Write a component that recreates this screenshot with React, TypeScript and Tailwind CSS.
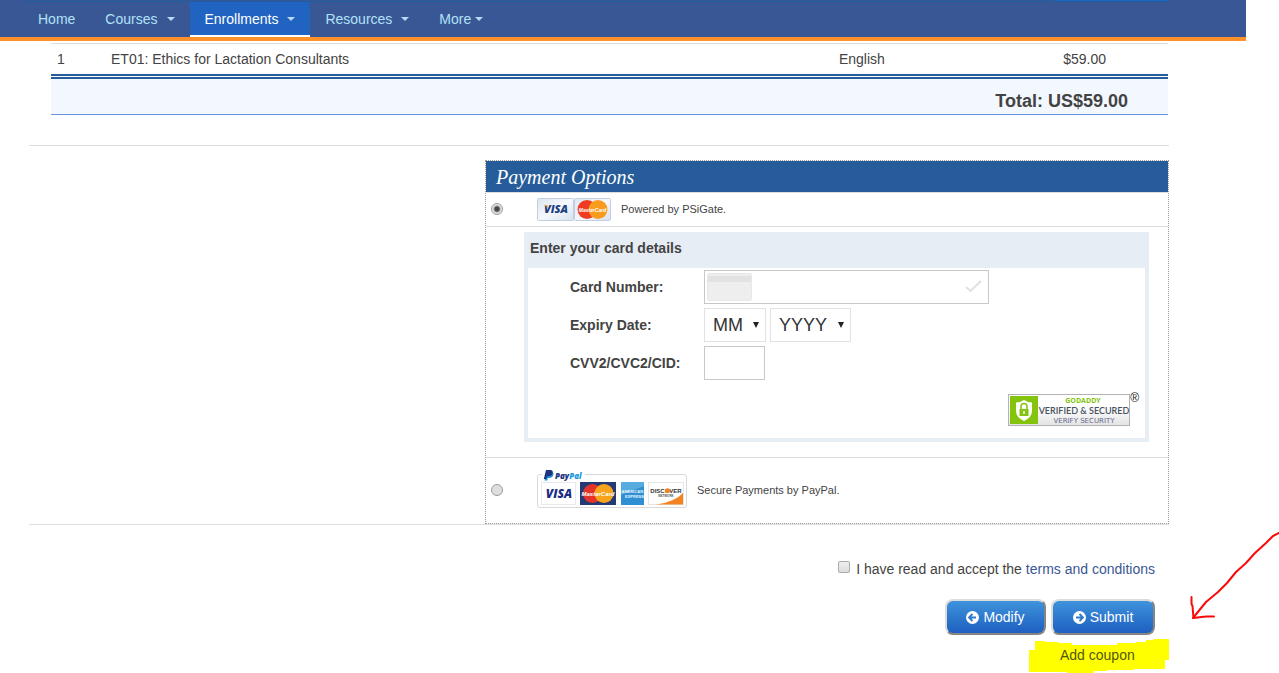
import { useState } from "react";

const navItems = [
  { label: "Home" },
  { label: "Courses", caret: "ml-[9px]" },
  { label: "Enrollments", caret: "ml-[9px]", active: true },
  { label: "Resources", caret: "ml-[9px]" },
  { label: "More", caret: "ml-1" },
];

const rows = [
  { no: 1, title: "ET01: Ethics for Lactation Consultants", language: "English", price: "$59.00" },
];

const radioClass =
  "m-0 mb-0.5 size-3 shrink-0 appearance-none rounded-full border border-[#9c9c9c] bg-[#dedede] checked:bg-[radial-gradient(circle,#484848_0_2px,#e4e4e4_4px)]";
const inputClass = "h-[34px] rounded-none border border-[#c8c8c8] bg-white text-lg text-[#333] outline-none";
const selectClass =
  "h-[34px] w-full appearance-none rounded-none border border-[#e2e2e2] bg-white pl-2 text-lg text-[#333] outline-none";
const buttonClass =
  "flex h-9 items-center justify-center gap-1 rounded-lg border-2 border-t-[#dcdcdc] border-r-[#858585] border-b-[#858585] border-l-[#dcdcdc] bg-linear-to-b from-[#3f93dc] to-[#1f5fc0] text-white";

function Navbar() {
  return (
    <nav className="mr-[33px] h-[41px] border-b-4 border-[#ff912b] bg-[#3a5795]">
      <div className="mr-[77px] ml-auto h-px w-[115px] bg-[#2163c1]" />
      <div className="mr-[77px] ml-[23px] flex h-9 items-stretch border-t border-[#1b5fa0]">
        {navItems.map((item) => (
          <a
            key={item.label}
            href="#"
            className={
              item.active
                ? "flex items-center border-b-2 border-white bg-[#2163c1] px-[15px] text-white"
                : "flex items-center px-[15px] pb-0.5 text-[#b0e2f7]"
            }
          >
            {item.label}
            {item.caret && (
              <span
                className={`${item.caret} border-x-4 border-t-4 border-x-transparent border-t-[#b9d9f7]`}
              />
            )}
          </a>
        ))}
      </div>
    </nav>
  );
}

function OrderTable() {
  return (
    <table className="w-full table-fixed border-collapse">
      <colgroup>
        <col className="w-[54px]" />
        <col />
        <col className="w-[18%]" />
        <col className="w-[12%]" />
      </colgroup>
      <tbody>
        {rows.map((row) => (
          <tr key={row.no} className="h-[33px] border-t border-[#ddd]">
            <td className="pl-1.5">{row.no}</td>
            <td className="pl-1.5">{row.title}</td>
            <td className="pl-1.5">{row.language}</td>
            <td className="pr-[62px] text-right">{row.price}</td>
          </tr>
        ))}
      </tbody>
      <tfoot>
        <tr className="h-[38px] border-t-[5px] border-t-[#255c99] bg-[#f3f8ff] [border-top-style:double]">
          <td colSpan={4} className="border-b border-b-[#6a93e8] pt-2 pr-10 text-right text-lg leading-6 font-bold">
            Total: US$59.00
          </td>
        </tr>
      </tfoot>
    </table>
  );
}

function CardLogos() {
  return (
    <svg width="74" height="23" viewBox="0 0 74 23" role="img" aria-label="Visa and MasterCard">
      <defs>
        <linearGradient id="card" x1="0" y1="0" x2="1" y2="1">
          <stop offset="0" stopColor="#dce5f1" />
          <stop offset=".5" stopColor="#f6f8fc" />
          <stop offset="1" stopColor="#d7e1ef" />
        </linearGradient>
      </defs>
      <rect x=".5" y=".5" width="36" height="22" rx="1" fill="url(#card)" stroke="#c3cfe0" />
      <rect x="37.5" y=".5" width="36" height="22" rx="1" fill="url(#card)" stroke="#c3cfe0" />
      <text x="19" y="15" textAnchor="middle" fontFamily="Open Sans, sans-serif" fontSize="11" fontWeight="800" fontStyle="italic" fill="#1d3f80">VISA</text>
      <path d="M7 7h3l1.500 3z" fill="#e9a32c" />
      <circle cx="50" cy="11.500" r="9.500" fill="#ef3b22" />
      <circle cx="61" cy="11.500" r="9.500" fill="#f99b1f" />
      <text x="55.500" y="13.500" textAnchor="middle" fontFamily="Liberation Sans, sans-serif" fontSize="5" fontWeight="700" fontStyle="italic" fill="#fff">MasterCard</text>
    </svg>
  );
}

function PayPalLogos() {
  return (
    <svg width="150" height="40" viewBox="0 0 150 40" role="img" aria-label="PayPal, Visa, MasterCard, American Express, Discover">
      <path d="M5 5.500H3q-2.500 0-2.500 2.500v28q0 2.500 2.500 2.500h144q2.500 0 2.500-2.500V8q0-2.500-2.500-2.500H48" fill="none" stroke="#d9d9d9" />
      <path d="M10 3h4.500q2.500.500 1.800 3-.800 3-4.300 3h-1.200l-.6 2.500H7.500z" fill="#1f93d4" />
      <path d="M9 1h4.500q2.800.300 2.200 3-.800 3.200-4.200 3.200H10L9.200 10H6.800z" fill="#1c3480" />
      <text x="18" y="10" fontFamily="Open Sans, sans-serif" fontSize="8" fontWeight="800" fontStyle="italic" fill="#1c3480">
        Pay<tspan fill="#1f9ade">Pal</tspan>
      </text>
      <rect x="4.500" y="13.500" width="34" height="22" fill="#fff" stroke="#e8e8ee" />
      <text x="22" y="29" textAnchor="middle" fontFamily="Open Sans, sans-serif" fontSize="12" fontWeight="800" fontStyle="italic" fill="#1b2d83">VISA</text>
      <rect x="43" y="13" width="36" height="23" fill="#233a75" />
      <circle cx="55.500" cy="24.500" r="9.500" fill="#e6332a" />
      <circle cx="67" cy="24.500" r="9.500" fill="#f9a51b" />
      <text x="61" y="27" textAnchor="middle" fontFamily="Liberation Sans, sans-serif" fontSize="6" fontWeight="700" fontStyle="italic" fill="#fff">MasterCard</text>
      <rect x="84" y="13" width="23" height="23" fill="#2f8fd2" />
      <path d="M84 13h23v4L84 26z" fill="#57acdf" />
      <text x="84.500" y="24" fontFamily="Liberation Sans, sans-serif" fontSize="4" fontWeight="700" fill="#e8f5fd">AMERICAN</text>
      <text x="88" y="29" fontFamily="Liberation Sans, sans-serif" fontSize="4" fontWeight="700" fill="#e8f5fd">EXPRESS</text>
      <rect x="111.500" y="13.500" width="35" height="22" fill="#fff" stroke="#e5e5e5" />
      <path d="M119 35.500Q138 33 146 24v11.500z" fill="#f58220" />
      <text x="129" y="24" textAnchor="middle" fontFamily="Liberation Sans, sans-serif" fontSize="6" fontWeight="700" fill="#333">
        DISC<tspan fill="#f58220">O</tspan>VER
      </text>
      <circle cx="130.500" cy="21.800" r="2.500" fill="#f58220" />
      <text x="129" y="28" textAnchor="middle" fontFamily="Liberation Sans, sans-serif" fontSize="3" fontWeight="700" fill="#555">NETWORK</text>
    </svg>
  );
}

function SecuritySeal() {
  return (
    <div className="flex">
      <svg width="122" height="32" viewBox="0 0 122 32" role="img" aria-label="GoDaddy verified and secured">
        <defs>
          <linearGradient id="seal" x1="0" y1="0" x2="0" y2="1">
            <stop offset=".4" stopColor="#fff" />
            <stop offset="1" stopColor="#e3e3e3" />
          </linearGradient>
        </defs>
        <rect x=".5" y=".5" width="121" height="31" fill="url(#seal)" stroke="#b3b3b3" />
        <rect x="2" y="2" width="28" height="28" fill="#84c40f" />
        <path d="M16 6q4 2.500 8 2.500v8q0 7-8 10.500-8-3.500-8-10.500v-8Q12 8.500 16 6z" fill="#fff" />
        <rect x="11.500" y="15" width="9" height="7" fill="#84c40f" />
        <path d="M13 15v-2.500a3 3 0 0 1 6 0V15" fill="none" stroke="#84c40f" strokeWidth="1.500" />
        <path d="M16 17v3" stroke="#fff" strokeWidth="1.500" />
        <text x="75" y="9" textAnchor="middle" fontFamily="Open Sans, sans-serif" fontSize="7" fontWeight="700" fill="#84c40f">GODADDY</text>
        <text x="76" y="20" textAnchor="middle" fontFamily="Lato, sans-serif" fontSize="9" fontWeight="600" fill="#46525e">VERIFIED &amp; SECURED</text>
        <text x="76" y="29" textAnchor="middle" fontFamily="DejaVu Sans, sans-serif" fontSize="7" fill="#63678c">VERIFY SECURITY</text>
      </svg>
      <span className="text-xs leading-2 text-[#222]">®</span>
    </div>
  );
}

function Select({ id, label, text, width }: { id: string; label: string; text: string; width: string }) {
  return (
    <div className={`relative ${width}`}>
      <select id={id} aria-label={label} className={selectClass}>
        <option>{text}</option>
      </select>
      <svg className="pointer-events-none absolute top-3.5 right-[7px]" width="6" height="6" viewBox="0 0 6 6">
        <path d="M0 0h6L3 6z" fill="#222" />
      </svg>
    </div>
  );
}

function CardForm() {
  return (
    <div className="mr-[19px] ml-[38px] border-4 border-t-0 border-[#e6edf4]">
      <h3 className="h-9 bg-[#e6edf4] pl-0.5 leading-8 font-bold">Enter your card details</h3>
      <div className="grid grid-cols-[134px_1fr] items-center gap-y-1 pt-0.5 pl-[42px] font-bold">
        <label htmlFor="card-number">Card Number:</label>
        <div className="relative w-[285px]">
          <input id="card-number" className={`${inputClass} w-full pr-10 pl-[52px]`} />
          <span className="absolute top-[3px] left-[3px] h-7 w-[45px] rounded-xs border border-[#e8e8e8] bg-[linear-gradient(#eee_2px,#e2e2e2_2px_8px,#eee_8px)]" />
          <svg className="absolute top-2.5 right-[7px]" width="17" height="13" viewBox="0 0 17 13">
            <path d="M1 7l4.500 4L16 1" fill="none" stroke="#e0e0e0" strokeWidth="2" />
          </svg>
        </div>
        <label htmlFor="exp-month">Expiry Date:</label>
        <div className="flex gap-1 font-normal">
          <Select id="exp-month" label="Month" text="MM" width="w-[62px]" />
          <Select id="exp-year" label="Year" text="YYYY" width="w-[81px]" />
        </div>
        <label htmlFor="cvv">CVV2/CVC2/CID:</label>
        <input id="cvv" className={`${inputClass} w-[61px] px-2`} />
      </div>
      <div className="flex justify-end pt-3.5 pr-1.5 pb-3">
        <SecuritySeal />
      </div>
    </div>
  );
}

function PaymentOptions() {
  const [method, setMethod] = useState("card");

  return (
    <section className="ml-auto w-3/5 border border-dotted border-[#999]">
      <h2 className="h-[31px] bg-[#255c99] pl-2.5 font-['Liberation_Serif',serif] text-xl leading-8 text-white italic">
        Payment Options
      </h2>
      <label className="flex h-[34px] items-center border-t border-[#ddd] pl-[5px] text-[11px]">
        <input type="radio" name="method" className={radioClass} checked={method === "card"} onChange={() => setMethod("card")} />
        <span className="mr-2.5 ml-[34px]">
          <CardLogos />
        </span>
        Powered by PSiGate.
      </label>
      <div className="border-t border-[#ddd] pt-[5px] pb-[15px]">
        <CardForm />
      </div>
      <label className="flex h-[66px] items-center border-t border-[#ddd] pl-[5px] text-[11px]">
        <input type="radio" name="method" className={radioClass} checked={method === "paypal"} onChange={() => setMethod("paypal")} />
        <span className="mr-2.5 mb-1 ml-[34px]">
          <PayPalLogos />
        </span>
        Secure Payments by PayPal.
      </label>
    </section>
  );
}

function CircleArrow({ direction }: { direction: "left" | "right" }) {
  return (
    <svg width="13" height="13" viewBox="0 0 13 13" className={direction === "right" ? "rotate-180" : ""}>
      <circle cx="6.500" cy="6.500" r="6.500" fill="#fff" />
      <path d="M6.500 3L3 6.500 6.500 10M3.500 6.500h6.500" fill="none" stroke="#2f79cd" strokeWidth="1.800" />
    </svg>
  );
}

function Arrow() {
  return (
    <svg className="absolute top-[532px] right-0" width="90" height="90" viewBox="0 0 90 90" fill="none" stroke="#fa0a0a" strokeWidth="2" strokeLinecap="round" strokeLinejoin="round">
      <path d="M90 1l-6 3-7 7-11 10-9 10-10 9-9 11-9 9-12 10L4 86" />
      <path d="M2.500 65v7l1 2 1 12 8-1 5-.500h7.500" />
    </svg>
  );
}

export default function App() {
  return (
    <div className="relative overflow-hidden bg-white font-['Liberation_Sans',Arial,sans-serif] text-sm text-[#434343]">
      <Navbar />
      <main className="mr-[110px] ml-[29px] pt-0.5">
        <div className="mr-px mb-[30px] ml-[22px]">
          <OrderTable />
        </div>
        <div className="border-y border-[#ddd] pt-3.5">
          <PaymentOptions />
        </div>
        <div className="flex flex-col items-end pt-[34px] pr-3.5">
          <div className="flex items-center">
            <input
              id="terms"
              type="checkbox"
              className="mr-1.5 mb-1 size-3 appearance-none rounded-xs border border-[#aaa] bg-linear-to-b from-[#eee] to-[#ddd] checked:bg-[#3a5795]"
            />
            <label htmlFor="terms">
              I have read and accept the{" "}
              <a href="#" className="text-[#3a5795]">
                terms and conditions
              </a>
            </label>
          </div>
          <div className="mt-5 flex gap-[5px]">
            <button type="button" className={`${buttonClass} w-[101px]`}>
              <CircleArrow direction="left" />
              Modify
            </button>
            <button type="submit" className={`${buttonClass} w-[104px]`}>
              <CircleArrow direction="right" />
              Submit
            </button>
          </div>
        </div>
        <div className="relative mt-1 ml-auto flex h-[34px] w-[141px] items-center">
          <svg className="absolute inset-0" width="141" height="34" viewBox="0 0 141 34" fill="#ff0">
            <path d="M7 2h10v1h13v1h14v2h45V4h19V3h10V1h8V0h15v21h-4v9h-31v1H79v1H66v2H39v-1H1V11h6z" />
          </svg>
          <a href="#" className="relative pb-0.5 pl-8 text-[#52570f]">
            Add coupon
          </a>
        </div>
      </main>
      <Arrow />
    </div>
  );
}
